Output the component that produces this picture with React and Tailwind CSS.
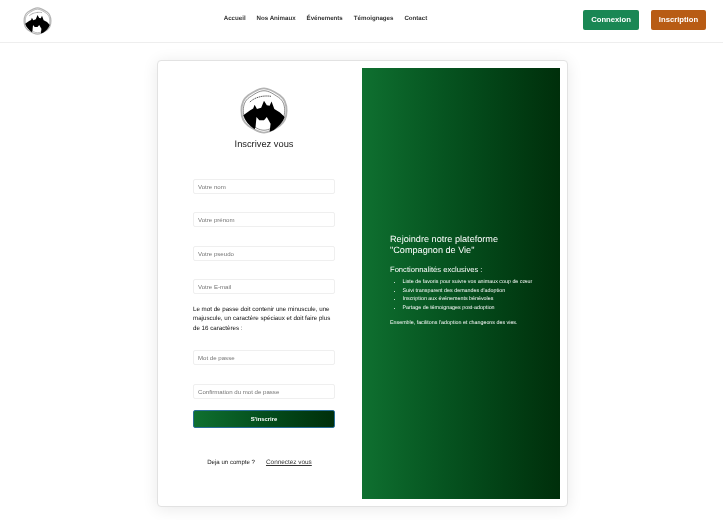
const sans = "font-['Liberation_Sans',Arial,sans-serif] [text-rendering:geometricPrecision]";

function Logo({ className }) {
  return (
    <svg viewBox="0 0 100 100" className={className}>
      <path
        d="M50 3C62 3 72 10 84 18C95 26 98 38 98 50C98 62 95 74 84 82C72 90 62 97 50 97C38 97 28 90 16 82C5 74 2 62 2 50C2 38 5 26 16 18C28 10 38 3 50 3Z"
        fill="white"
        stroke="#b4b4b4"
        strokeWidth="4"
      />
      <path
        d="M50 8C61 8 70 15 81 22C91 29 94 39 94 50C94 61 91 71 81 78C70 85 61 92 50 92C39 92 30 85 19 78C9 71 6 61 6 50C6 39 9 29 19 22C30 15 39 8 50 8Z"
        fill="none"
        stroke="#555"
        strokeWidth="1.4"
      />
      <path
        d="M6 60L20 50L27 46L30 38L35 47L44 44L50 29L56 39L62 40L66 31L72 47L84 54L94 64C90 76 80 85 70 92L62 95L64 78L56 64L50 71L40 71L34 64L32 85L30 90C18 82 10 72 6 60Z"
        fill="#000"
      />
      <path d="M20 32C30 22 48 17 66 20" fill="none" stroke="#444" strokeWidth="2" strokeDasharray="3 1.5" />
    </svg>
  );
}

function Field({ placeholder, type = "text", className = "" }) {
  return (
    <input
      type={type}
      placeholder={placeholder}
      className={`w-full h-[15px] px-[4px] bg-white border border-[#efefef] rounded-[2px] text-[6.1px] text-[#555] placeholder:text-[#757575] outline-none ${className}`}
    />
  );
}

export default function App() {
  const links = ["Accueil", "Nos Animaux", "Événements", "Témoignages", "Contact"];
  const features = [
    "Liste de favoris pour suivre vos animaux coup de cœur",
    "Suivi transparent des demandes d'adoption",
    "Inscription aux événements bénévoles",
    "Partage de témoignages post-adoption",
  ];

  return (
    <div className={`${sans} w-[723px] h-[520px] overflow-hidden will-change-transform`}>
      <header className="h-[43px] flex items-center justify-between border-b border-[#eeeeee] pl-[22px] pr-[17px]">
        <Logo className="w-[31px] h-[28px]" />
        <nav className="flex gap-[11px] ml-[15px] -mt-[5px]">
          {links.map((l) => (
            <a key={l} className="text-[6.15px] font-bold text-[#333333]">
              {l}
            </a>
          ))}
        </nav>
        <div className="flex gap-[12px] -mt-[2px]">
          <button className="w-[56px] h-[20px] rounded-[2px] bg-[#198754] text-white text-[7.7px] font-bold">
            Connexion
          </button>
          <button className="w-[55px] h-[20px] rounded-[2px] bg-[#b85c14] text-white text-[7.7px] font-bold">
            Inscription
          </button>
        </div>
      </header>

      <main className="pt-[17px] flex justify-center">
        <div className="w-[411px] h-[447px] flex p-[7px] bg-white border border-[#e2e2e2] rounded-[4px] shadow-[0_2px_16px_rgba(0,0,0,0.09)] translate-x-[1px]">
          <section className="w-[197px] pl-[28px] pr-[27px] pt-[19px] flex flex-col items-center">
            <Logo className="w-[50px] h-[47px]" />
            <h1 className="mt-[3.5px] text-[9.3px] leading-[12px] text-[#222222]">Inscrivez vous</h1>

            <form className="w-full mt-[29px] flex flex-col">
              <Field placeholder="Votre nom" />
              <Field placeholder="Votre prénom" className="mt-[18.5px]" />
              <Field placeholder="Votre pseudo" className="mt-[18.5px]" />
              <Field placeholder="Votre E-mail" className="mt-[18.5px]" />
              <p className="mt-[10.5px] text-[6.2px] leading-[9.5px] text-[#111111]">
                Le mot de passe doit contenir une minuscule, une majuscule, un caractère spéciaux et doit faire plus de
                16 caractères :
              </p>
              <Field placeholder="Mot de passe" type="password" className="mt-[17px]" />
              <Field placeholder="Confirmation du mot de passe" type="password" className="mt-[19px]" />
              <button
                type="button"
                className="mt-[11px] h-[18px] rounded-[2px] border border-[#2a6f97] bg-gradient-to-r from-[#0f7030] to-[#002f0b] text-white text-[5.9px] font-bold"
              >
                S'inscrire
              </button>
            </form>

            <div className="mt-[30px] mr-[9px] flex gap-[11px] text-[6.1px] text-[#222222]">
              <span>Deja un compte ?</span>
              <a className="underline text-[#333333] text-[6.4px]">Connectez vous</a>
            </div>
          </section>

          <aside className="w-[198px] flex flex-col justify-center pl-[28px] pr-[16px] pb-[7px] text-white bg-gradient-to-r from-[#0f7030] to-[#002f0b]">
            <h2 className="text-[9.15px] leading-[11.5px]">
              Rejoindre notre plateforme
              <br />
              "Compagnon de Vie"
            </h2>
            <h3 className="mt-[8px] text-[7.6px] leading-[10px]">Fonctionnalités exclusives :</h3>
            <ul className="mt-[3.5px] pl-[12.5px] list-disc text-[5.35px] leading-[8.5px]">
              {features.map((f) => (
                <li key={f}>{f}</li>
              ))}
            </ul>
            <p className="mt-[6.5px] text-[5.33px] leading-[8px]">Ensemble, facilitons l'adoption et changeons des vies.</p>
          </aside>
        </div>
      </main>
    </div>
  );
}
